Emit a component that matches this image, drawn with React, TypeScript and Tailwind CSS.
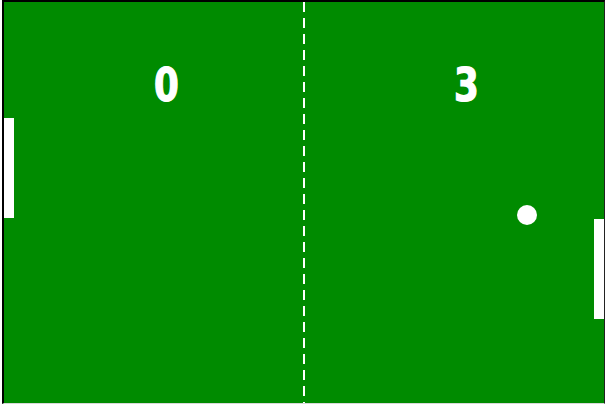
const scoreFont = { fontFamily: '"DejaVu Sans", "Liberation Sans", sans-serif' };

export default function App() {
  return (
    <div className="h-[406px] w-[607px] bg-white pl-[2px]">
      <div className="relative h-[404px] w-[603px] overflow-hidden border-t-2 border-l-2 border-r border-b border-t-black border-l-black border-r-[#222] border-b-[#d8d8d8] bg-[#008b00]">
        {/* net */}
        <svg className="absolute left-[299px] top-0" width="2" height="401">
          <line x1="1" y1="0" x2="1" y2="401" stroke="#fff" strokeWidth="2" strokeDasharray="10 6" />
        </svg>

        {/* scores */}
        <span className="absolute left-[148px] top-[60px] scale-x-[0.86] text-[46px] leading-none font-bold font-stretch-condensed text-white [-webkit-text-stroke:1.2px_#fff]" style={scoreFont}>
          0
        </span>
        <span className="absolute left-[448px] top-[60px] scale-x-[0.86] text-[46px] leading-none font-bold font-stretch-condensed text-white [-webkit-text-stroke:1.2px_#fff]" style={scoreFont}>
          3
        </span>

        {/* paddles */}
        <div className="absolute left-0 top-[116px] h-[100px] w-[10px] bg-white" />
        <div className="absolute right-0 top-[217px] h-[100px] w-[10px] bg-white" />

        {/* ball */}
        <div className="absolute left-[513px] top-[203px] h-5 w-5 rounded-full bg-white" />
      </div>
    </div>
  );
}
